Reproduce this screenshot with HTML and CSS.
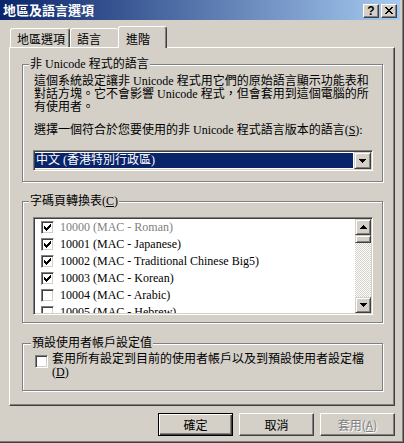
FILE: index.html
```html
<!DOCTYPE html>
<html lang="zh-Hant">

<head>
  <meta charset="UTF-8">
  <title>地區及語言選項</title>
  <link rel="stylesheet" href="styles.css">
</head>

<body>

  <div class="window">
    <div class="titlebar">
      <span class="title">地區及語言選項</span>
      <div class="caption-buttons">
        <span class="cap-btn help">?</span>
        <span class="cap-btn close">
          <svg width="8" height="7" viewBox="0 0 8 7" shape-rendering="crispEdges">
            <path d="M0 0h2v1h-2z M6 0h2v1h-2z M1 1h2v1h-2z M5 1h2v1h-2z M2 2h4v1h-4z M3 3h2v1h-2z M2 4h4v1h-4z M1 5h2v1h-2z M5 5h2v1h-2z M0 6h2v1h-2z M6 6h2v1h-2z" fill="#000"/>
          </svg>
        </span>
      </div>
    </div>

    <div class="tabs">
      <div class="tab tab-region">地區選項</div>
      <div class="tab tab-lang">語言</div>
      <div class="tab active">進階</div>
    </div>

    <div class="panel">
      <fieldset class="group group-lang">
        <legend>非 Unicode 程式的語言</legend>
        <p class="desc">這個系統設定讓非 Unicode 程式用它們的原始語言顯示功能表和<br>對話方塊。它不會影響 Unicode 程式，但會套用到這個電腦的所<br>有使用者。</p>
        <p class="prompt">選擇一個符合於您要使用的非 Unicode 程式語言版本的語言(<u>S</u>):</p>
        <div class="combo">
          <div class="combo-value"><span>中文 (香港特別行政區)</span></div>
          <div class="arrow-btn">
            <svg width="7" height="4" viewBox="0 0 7 4" shape-rendering="crispEdges"><path d="M0 0h7v1h-7z M1 1h5v1h-5z M2 2h3v1h-3z M3 3h1v1h-1z" fill="#000"/></svg>
          </div>
        </div>
      </fieldset>

      <fieldset class="group group-codepage">
        <legend>字碼頁轉換表(<u>C</u>)</legend>
        <div class="listbox">
          <ul class="list">
            <li class="row disabled"><span class="check on"></span>10000 (MAC - Roman)</li>
            <li class="row"><span class="check on"></span>10001 (MAC - Japanese)</li>
            <li class="row"><span class="check on"></span>10002 (MAC - Traditional Chinese Big5)</li>
            <li class="row"><span class="check on"></span>10003 (MAC - Korean)</li>
            <li class="row"><span class="check"></span>10004 (MAC - Arabic)</li>
            <li class="row"><span class="check"></span>10005 (MAC - Hebrew)</li>
          </ul>
          <div class="scrollbar">
            <div class="arrow-btn scroll-btn">
              <svg width="7" height="4" viewBox="0 0 7 4" shape-rendering="crispEdges"><path d="M3 0h1v1h-1z M2 1h3v1h-3z M1 2h5v1h-5z M0 3h7v1h-7z" fill="#000"/></svg>
            </div>
            <div class="thumb"></div>
            <div class="track"></div>
            <div class="arrow-btn scroll-btn">
              <svg width="7" height="4" viewBox="0 0 7 4" shape-rendering="crispEdges"><path d="M0 0h7v1h-7z M1 1h5v1h-5z M2 2h3v1h-3z M3 3h1v1h-1z" fill="#000"/></svg>
            </div>
          </div>
        </div>
      </fieldset>

      <fieldset class="group group-default">
        <legend>預設使用者帳戶設定值</legend>
        <label class="option">
          <span class="check"></span>
          <span>套用所有設定到目前的使用者帳戶以及到預設使用者設定檔<br>(<u>D</u>)</span>
        </label>
      </fieldset>
    </div>

    <div class="footer">
      <button type="button" class="btn default">確定</button>
      <button type="button" class="btn">取消</button>
      <button type="button" class="btn" disabled>套用(<u>A</u>)</button>
    </div>
  </div>

</body>

</html>
```

FILE: styles.css
```css
* {
  box-sizing: border-box;
}

body {
  margin: 0;
  background: #d4d0c8;
  font-family: "Liberation Serif", "Noto Sans CJK TC", serif;
  font-size: 12px;
  color: #000;
}

.window {
  width: 404px;
  height: 443px;
  padding-right: 3px;
  border-right: 1px solid #404040;
  border-bottom: 1px solid #404040;
  box-shadow: inset -1px -1px #808080;
  overflow: hidden;
}

/* title bar */

.titlebar {
  height: 20px;
  padding: 0 3px;
  display: flex;
  align-items: center;
  justify-content: space-between;
  background: linear-gradient(to right, #0a246a, #a6caf0);
}

.title {
  color: #fff;
  font-family: "Noto Sans CJK TC", sans-serif;
  font-weight: bold;
  font-size: 13px;
  line-height: 14px;
}

.caption-buttons {
  display: flex;
  gap: 2px;
  margin-top: 1px;
}

.cap-btn {
  width: 16px;
  height: 14px;
  display: flex;
  align-items: center;
  justify-content: center;
  background: #d4d0c8;
  border: 1px solid;
  border-color: #fff #404040 #404040 #fff;
  box-shadow: inset -1px -1px #808080;
}

.help {
  font-family: "Liberation Sans", sans-serif;
  font-weight: bold;
  font-size: 12px;
  line-height: 12px;
}

/* tabs */

.tabs {
  display: flex;
  align-items: flex-end;
  height: 21px;
  margin: 6px 0 0 10px;
}

.tab {
  height: 19px;
  padding: 3px 0 0 6px;
  line-height: 14px;
  background: #d4d0c8;
  border-top: 1px solid #fff;
  border-left: 1px solid #fff;
  border-right: 1px solid #404040;
  box-shadow: inset -1px 0 #808080;
  border-radius: 3px 3px 0 0;
  font-family: "Noto Sans CJK TC", sans-serif;
}

.tab-region {
  width: 60px;
}

.tab-lang {
  width: 48px;
  border-right: none;
  box-shadow: none;
}

.tab.active {
  width: 49px;
  height: 22px;
  padding: 5px 0 0 7px;
  margin-bottom: -1px;
  position: relative;
  z-index: 1;
}

/* tab page */

.panel {
  width: 386px;
  height: 359px;
  margin-left: 9px;
  padding: 9px 11px 0 12px;
  border: 1px solid;
  border-color: #fff #404040 #404040 #fff;
  box-shadow: inset -1px -1px #808080;
}

.group {
  margin: 0;
  padding: 4px 9px 10px 10px;
  min-width: 0;
  border: 1px solid #808080;
  box-shadow: inset 1px 1px #fff, 1px 1px #fff;
}

.group legend {
  margin-left: -4px;
  padding: 0 1px;
  line-height: 14px;
  background: #d4d0c8;
}

.group-codepage {
  margin-top: 12px;
  padding-top: 9px;
  padding-bottom: 7px;
}

.group-default {
  margin-top: 13px;
  padding: 3px 9px 11px 12px;
}

.desc {
  margin: 0;
  padding-left: 1px;
  line-height: 13px;
}

.prompt {
  margin: 10px 0 0;
  padding-left: 1px;
  line-height: 13px;
}

/* combo box */

.combo {
  display: flex;
  height: 21px;
  margin-top: 13px;
  padding: 1px;
  background: #fff;
  border: 1px solid;
  border-color: #808080 #fff #fff #808080;
  box-shadow: inset 1px 1px #404040, inset -1px -1px #d4d0c8;
}

.combo-value {
  flex: 1;
  padding: 1px 1px 1px 0;
}

.combo-value span {
  display: block;
  height: 15px;
  padding-left: 1px;
  line-height: 15px;
  color: #fff;
  background: #0a246a;
}

.arrow-btn {
  width: 17px;
  height: 17px;
  display: flex;
  align-items: center;
  justify-content: center;
  background: #d4d0c8;
  border: 1px solid;
  border-color: #d4d0c8 #404040 #404040 #d4d0c8;
  box-shadow: inset 1px 1px #fff, inset -1px -1px #808080;
}

/* list box */

.listbox {
  display: flex;
  height: 98px;
  padding: 1px;
  background: #fff;
  border: 1px solid;
  border-color: #808080 #fff #fff #808080;
  box-shadow: inset 1px 1px #404040, inset -1px -1px #d4d0c8;
}

.list {
  flex: 1;
  margin: 0;
  padding: 0 0 0 6px;
  list-style: none;
  overflow: hidden;
}

.row {
  display: flex;
  align-items: center;
  gap: 6px;
  height: 17px;
  line-height: 17px;
  white-space: nowrap;
}

.row.disabled {
  color: #808080;
}

.check {
  flex: none;
  width: 13px;
  height: 13px;
  display: flex;
  align-items: center;
  justify-content: center;
  background: #fff;
  border: 1px solid;
  border-color: #808080 #fff #fff #808080;
  box-shadow: inset 1px 1px #404040, inset -1px -1px #d4d0c8;
}

.check.on::after {
  content: "";
  width: 7px;
  height: 7px;
  background: url("data:image/svg+xml,%3Csvg xmlns='http://www.w3.org/2000/svg' width='7' height='7' shape-rendering='crispEdges'%3E%3Cpath d='M6 0h1v1h-1z M5 1h2v1h-2z M0 2h1v1h-1z M4 2h3v1h-3z M0 3h2v1h-2z M3 3h3v1h-3z M0 4h5v1h-5z M1 5h3v1h-3z M2 6h1v1h-1z'/%3E%3C/svg%3E");
}

.scrollbar {
  width: 16px;
  display: flex;
  flex-direction: column;
}

.scroll-btn {
  width: 16px;
  height: 16px;
}

.thumb {
  height: 8px;
  background: #d4d0c8;
  border: 1px solid;
  border-color: #d4d0c8 #404040 #404040 #d4d0c8;
  box-shadow: inset 1px 1px #fff, inset -1px -1px #808080;
}

.track {
  flex: 1;
  background-image: conic-gradient(#fff 25%, #d4d0c8 0 50%, #fff 0 75%, #d4d0c8 0);
  background-size: 2px 2px;
}

/* default settings */

.option {
  display: flex;
  align-items: flex-start;
  gap: 4px;
  line-height: 13px;
}

.option .check {
  margin-top: 2px;
}

/* buttons */

.footer {
  display: flex;
  justify-content: flex-end;
  gap: 6px;
  margin-top: 7px;
  padding-right: 5px;
}

.btn {
  width: 75px;
  height: 23px;
  padding: 0;
  font-family: "Noto Sans CJK TC", sans-serif;
  font-size: 12px;
  color: #000;
  background: #d4d0c8;
  border: 1px solid;
  border-color: #fff #404040 #404040 #fff;
  box-shadow: inset -1px -1px #808080;
}

.btn.default {
  border-color: #000;
  box-shadow: inset 1px 1px #fff, inset -1px -1px #404040, inset -2px -2px #808080;
}

.btn:disabled {
  color: #808080;
  text-shadow: 1px 1px #fff;
}
```
